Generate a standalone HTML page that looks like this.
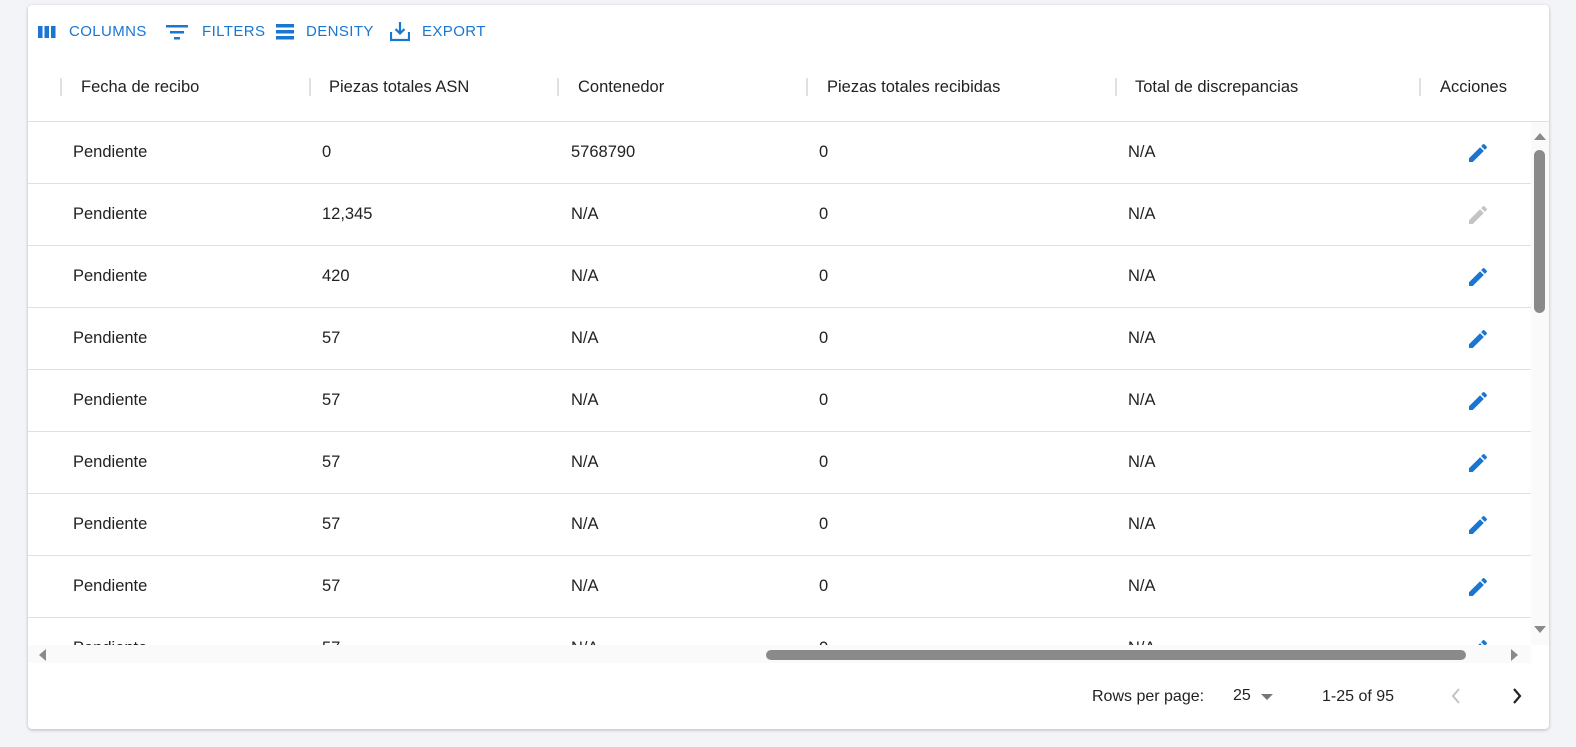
<!DOCTYPE html>
<html style="overflow:hidden;width:1576px;height:747px"><head><style>
html,body{margin:0;padding:0}
body{width:1576px;height:747px;background:#f3f4f8;font-family:"Liberation Sans",sans-serif;position:relative;overflow:hidden}
.card{position:absolute;left:28px;top:5px;width:1521px;height:724px;background:#fff;border-radius:4px;box-shadow:0 1px 3px rgba(0,0,0,.25);overflow:hidden}
.a{position:absolute;white-space:nowrap}
.tb{color:#1976d2;font-size:15px;letter-spacing:.4px;top:18px}
.hd{font-size:16.5px;color:#222;top:73px}
.sep{position:absolute;width:2px;height:18px;background:#e0e0e0;top:73px}
.line{position:absolute;left:0;width:1503px;height:1px;background:#e0e0e0}
.c{position:absolute;font-size:16.5px;color:#222}
</style></head><body>
<div class="card">
<svg class="a" style="left:10px;top:20px" width="18" height="14" viewBox="0 0 18 14"><rect x="0" y="1" width="4.5" height="12" fill="#1976d2"/><rect x="6.5" y="1" width="4.5" height="12" fill="#1976d2"/><rect x="13" y="1" width="4.5" height="12" fill="#1976d2"/></svg>
<div class="a tb" style="left:41px">COLUMNS</div>
<svg class="a" style="left:138px;top:19px" width="22" height="16" viewBox="0 0 22 16"><rect x="0" y="1" width="22" height="2.5" fill="#1976d2"/><rect x="4" y="7" width="14" height="2.5" fill="#1976d2"/><rect x="8" y="13" width="6" height="2.5" fill="#1976d2"/></svg>
<div class="a tb" style="left:174px">FILTERS</div>
<svg class="a" style="left:248px;top:19px" width="18" height="16" viewBox="0 0 18 16"><rect x="0" y="0" width="18" height="3.5" fill="#1976d2"/><rect x="0" y="6" width="18" height="3.5" fill="#1976d2"/><rect x="0" y="12" width="18" height="3.5" fill="#1976d2"/></svg>
<div class="a tb" style="left:278px">DENSITY</div>
<svg class="a" style="left:362px;top:16px" width="20" height="21" viewBox="0 0 20 21"><path d="M10 1v11M5.5 8l4.5 4.5L14.5 8" stroke="#1976d2" stroke-width="2.2" fill="none"/><path d="M1 11v8h18v-8" stroke="#1976d2" stroke-width="2.2" fill="none"/></svg>
<div class="a tb" style="left:394px">EXPORT</div>
<div class="sep" style="left:32px"></div><div class="a hd" style="left:53px">Fecha de recibo</div>
<div class="sep" style="left:281px"></div><div class="a hd" style="left:301px">Piezas totales ASN</div>
<div class="sep" style="left:529px"></div><div class="a hd" style="left:550px">Contenedor</div>
<div class="sep" style="left:778px"></div><div class="a hd" style="left:799px">Piezas totales recibidas</div>
<div class="sep" style="left:1087px"></div><div class="a hd" style="left:1107px">Total de discrepancias</div>
<div class="sep" style="left:1391px"></div><div class="a hd" style="left:1412px">Acciones</div>
<div class="line" style="top:116px;width:1521px"></div>
<div id="rows"></div>
<div class="a" style="left:1503px;top:117px;width:18px;height:523px;background:#fafafa"></div>
<svg class="a" style="left:1506px;top:127px" width="12" height="8"><path d="M0 8L6 1L12 8Z" fill="#8a8a8a"/></svg>
<div class="a" style="left:1506px;top:145px;width:11px;height:163px;background:#8a8a8a;border-radius:6px"></div>
<svg class="a" style="left:1506px;top:621px" width="12" height="8"><path d="M0 0L6 7L12 0Z" fill="#8a8a8a"/></svg>
<div class="a" style="left:0;top:640px;width:1503px;height:18px;background:#fafafa"></div>
<svg class="a" style="left:10px;top:644px" width="8" height="12"><path d="M8 0L1 6L8 12Z" fill="#8a8a8a"/></svg>
<div class="a" style="left:738px;top:645px;width:700px;height:10px;background:#8a8a8a;border-radius:5px"></div>
<svg class="a" style="left:1483px;top:644px" width="8" height="12"><path d="M0 0L7 6L0 12Z" fill="#8a8a8a"/></svg>
<div class="a" style="left:1064px;top:683px;font-size:16px;color:#222">Rows per page:</div>
<div class="a" style="left:1205px;top:682px;font-size:16px;color:#222">25</div>
<svg class="a" style="left:1233px;top:689px" width="12" height="6"><path d="M0 0L6 6L12 0Z" fill="#777"/></svg>
<div class="a" style="left:1294px;top:683px;font-size:16px;color:#222">1-25 of 95</div>
<svg class="a" style="left:1423px;top:683px" width="10" height="16"><path d="M8 1L2 8L8 15" stroke="#c4c4c4" stroke-width="2" fill="none"/></svg>
<svg class="a" style="left:1484px;top:683px" width="10" height="16"><path d="M2 1L8 8L2 15" stroke="#222" stroke-width="2.2" fill="none"/></svg>
</div>
<script>
var rows=[["0","5768790"],["12,345","N/A"],["420","N/A"],["57","N/A"],["57","N/A"],["57","N/A"],["57","N/A"],["57","N/A"],["57","N/A"]];
var h="";
rows.forEach(function(r,i){
 var t=117+i*62, ty=t+21;
 var col=i==1?"#c4c4c4":"#1976d2";
 if(i<8)h+='<div class="line" style="top:'+(t+61)+'px"></div>';
 h+='<div class="c" style="left:45px;top:'+ty+'px">Pendiente</div>';
 h+='<div class="c" style="left:294px;top:'+ty+'px">'+r[0]+'</div>';
 h+='<div class="c" style="left:543px;top:'+ty+'px">'+r[1]+'</div>';
 h+='<div class="c" style="left:791px;top:'+ty+'px">0</div>';
 h+='<div class="c" style="left:1100px;top:'+ty+'px">N/A</div>';
 h+='<svg class="a" style="left:1438px;top:'+(t+19)+'px" width="24" height="24" viewBox="0 0 24 24"><path d="M3 17.25V21h3.75L17.81 9.94l-3.75-3.75L3 17.25zM20.71 7.04a1 1 0 000-1.41l-2.34-2.34a1 1 0 00-1.41 0l-1.83 1.83 3.75 3.75 1.83-1.83z" fill="'+col+'"/></svg>';
});
document.getElementById("rows").outerHTML=h;
</script>
</body></html>
